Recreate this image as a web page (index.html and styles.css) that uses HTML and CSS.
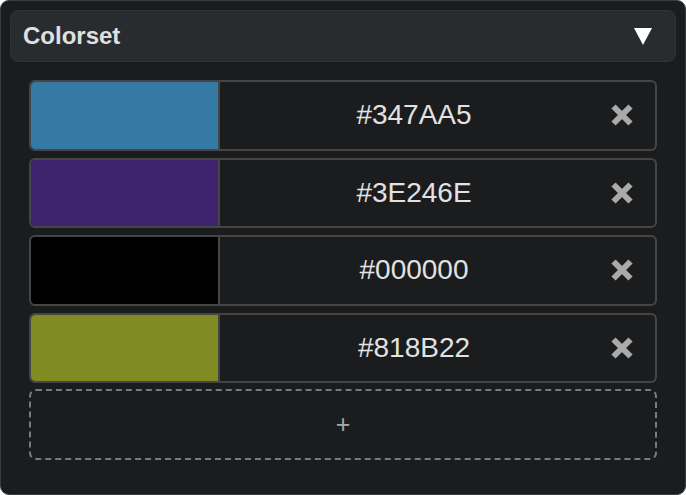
FILE: index.html
```html
<!DOCTYPE html>
<html>
<head>
<meta charset="utf-8">
<link rel="stylesheet" href="styles.css">
</head>
<body>
<div class="panel">
  <div class="panel-header">
    <span class="title">Colorset</span>
    <svg class="caret" width="18" height="17" viewBox="0 0 18 17"><polygon points="0,0 18,0 9,17" fill="#fff"/></svg>
  </div>
  <div class="panel-body">
    <div class="color-row">
      <div class="swatch" style="background:#347AA5"></div>
      <div class="hex">#347AA5</div>
      <button class="remove"><svg width="24" height="24" viewBox="0 0 24 24"><path d="M3.5 3.5 L20.5 20.5 M20.5 3.5 L3.5 20.5" stroke="#aaa" stroke-width="6"/></svg></button>
    </div>
    <div class="color-row">
      <div class="swatch" style="background:#3E246E"></div>
      <div class="hex">#3E246E</div>
      <button class="remove"><svg width="24" height="24" viewBox="0 0 24 24"><path d="M3.5 3.5 L20.5 20.5 M20.5 3.5 L3.5 20.5" stroke="#aaa" stroke-width="6"/></svg></button>
    </div>
    <div class="color-row">
      <div class="swatch" style="background:#000000"></div>
      <div class="hex">#000000</div>
      <button class="remove"><svg width="24" height="24" viewBox="0 0 24 24"><path d="M3.5 3.5 L20.5 20.5 M20.5 3.5 L3.5 20.5" stroke="#aaa" stroke-width="6"/></svg></button>
    </div>
    <div class="color-row">
      <div class="swatch" style="background:#818B22"></div>
      <div class="hex">#818B22</div>
      <button class="remove"><svg width="24" height="24" viewBox="0 0 24 24"><path d="M3.5 3.5 L20.5 20.5 M20.5 3.5 L3.5 20.5" stroke="#aaa" stroke-width="6"/></svg></button>
    </div>
    <button class="add">+</button>
  </div>
</div>
</body>
</html>
```

FILE: styles.css
```css
html, body {
  margin: 0;
  padding: 0;
  background: #ffffff;
}
body {
  font-family: "Liberation Sans", Arial, sans-serif;
}
.panel {
  box-sizing: border-box;
  width: 686px;
  height: 495px;
  background: #1b1c1e;
  border: 1px solid #3a3c3f;
  border-radius: 9px;
  padding: 9px;
}
.panel-header {
  box-sizing: border-box;
  height: 52px;
  background: #292c2f;
  border: 1px solid #303336;
  border-radius: 8px;
  display: flex;
  align-items: center;
  justify-content: space-between;
  padding: 0 23px 0 12px;
}
.title {
  color: #e0e0e0;
  font-weight: bold;
  font-size: 24px;
}
.caret {
  display: block;
  margin-top: 1px;
}
.panel-body {
  padding: 18px 19px;
  display: flex;
  flex-direction: column;
  gap: 7px;
}
.color-row {
  box-sizing: border-box;
  height: 70.5px;
  border: 2px solid #454545;
  border-radius: 6px;
  display: flex;
  align-items: stretch;
  overflow: hidden;
}
.swatch {
  width: 187px;
  border-right: 2px solid #454545;
  border-radius: 4px 0 0 4px;
}
.hex {
  flex: 1;
  display: flex;
  align-items: center;
  justify-content: center;
  color: #e2e2e2;
  font-size: 28px;
}
.remove {
  background: none;
  border: none;
  padding: 0 21px 0 2px;
  margin: 0;
  display: flex;
  align-items: center;
  cursor: pointer;
}
.remove svg {
  display: block;
}
.add {
  box-sizing: border-box;
  height: 71px;
  margin-top: -1px;
  border: 2px dashed #7a7a7a;
  border-radius: 7px;
  background: transparent;
  color: #aaa;
  font-family: "Liberation Sans", Arial, sans-serif;
  font-size: 25px;
  cursor: pointer;
}
```
